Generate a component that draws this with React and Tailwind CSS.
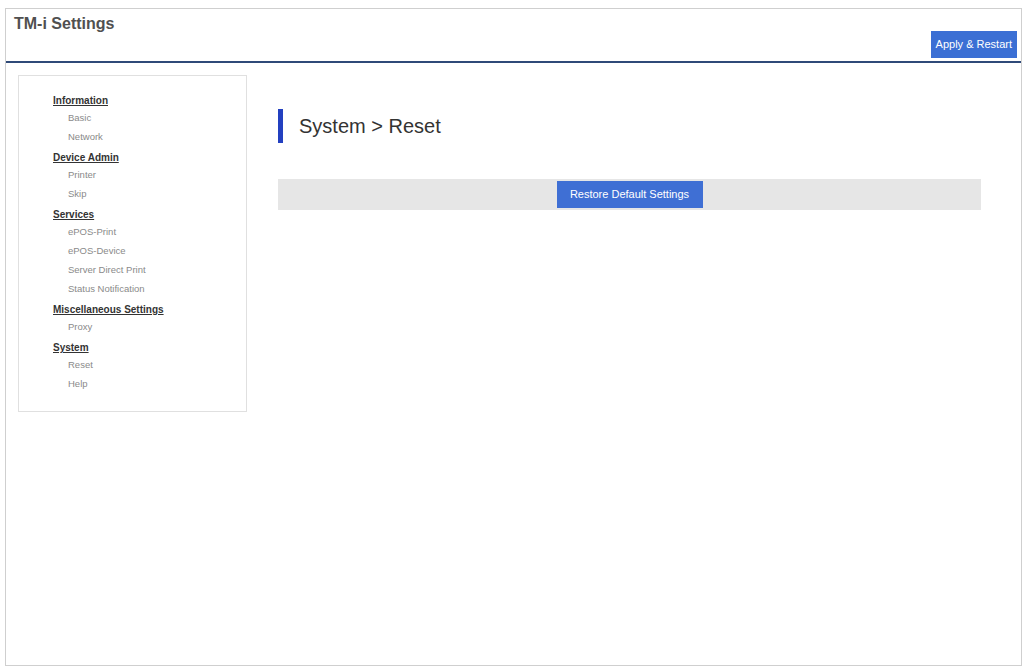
export default function App() {
  const nav = [
    { h: "Information", items: ["Basic", "Network"] },
    { h: "Device Admin", items: ["Printer", "Skip"] },
    { h: "Services", items: ["ePOS-Print", "ePOS-Device", "Server Direct Print", "Status Notification"] },
    { h: "Miscellaneous Settings", items: ["Proxy"] },
    { h: "System", items: ["Reset", "Help"] },
  ];
  return (
    <div className="h-[668px] w-[1026px] bg-white pl-[5px] pr-[4px] pt-[8px] pb-[2px] font-[Liberation_Sans,Arial,sans-serif]">
      <div className="flex h-full flex-col border border-[#cfcfcf]">
        <header className="flex h-[54px] justify-between border-b-2 border-[#2f4a78] pl-[8px] pr-[4px]">
          <h1 className="mt-[3px] text-[16px] font-bold text-[#505050]">TM-i Settings</h1>
          <button className="mt-[22px] h-[27px] bg-[#3b6fd4] px-[5px] text-[11px] text-white">Apply &amp; Restart</button>
        </header>
        <div className="flex flex-1 items-start pt-[12px]">
          <nav className="ml-[12px] w-[229px] border border-[#e0e0e0] pt-[18px] pb-[13px] pl-[34px]">
            {nav.map((g) => (
              <div key={g.h} className="mb-[5px]">
                <div className="text-[10px] font-bold leading-[14px] text-[#333] underline">{g.h}</div>
                {g.items.map((i) => (
                  <div key={i} className="pl-[15px] text-[9.5px] leading-[19px] text-[#8a8a8a]">{i}</div>
                ))}
              </div>
            ))}
          </nav>
          <main className="ml-[31px] flex-1 pt-[34px] pr-[40px]">
            <div className="flex h-[34px] items-center border-l-[5px] border-[#2340c0] pl-[16px] text-[20px] text-[#333]">System &gt; Reset</div>
            <div className="mt-[36px] flex h-[31px] items-center justify-center bg-[#e6e6e6]">
              <button className="h-[27px] w-[146px] bg-[#3f6fd4] text-[11px] text-white">Restore Default Settings</button>
            </div>
          </main>
        </div>
      </div>
    </div>
  );
}
